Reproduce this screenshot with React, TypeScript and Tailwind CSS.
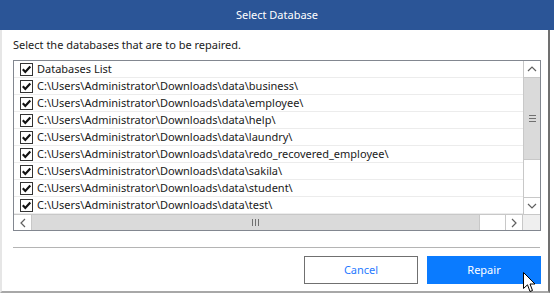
import React from 'react';

const paths = [
  'business',
  'employee',
  'help',
  'laundry',
  'redo_recovered_employee',
  'sakila',
  'student',
  'test',
];

function CheckBox() {
  return (
    <span className="w-[13px] h-[13px] border border-[#333333] bg-white flex items-center justify-center shrink-0">
      <svg width="11" height="11" viewBox="0 0 11 11">
        <path d="M1.8 5.3 L4.3 7.9 L9.3 2.6" fill="none" stroke="#111111" strokeWidth="2.2" />
      </svg>
    </span>
  );
}

function Row({ label }: { label: string }) {
  return (
    <div className="h-[17px] border-b border-[#ececec] flex items-center gap-[4px] pl-[6px] whitespace-nowrap">
      <CheckBox />
      <span className="text-[11px] leading-[16px] text-[#1a1a1a]">{label}</span>
    </div>
  );
}

function Chevron({ dir }: { dir: 'up' | 'down' | 'left' | 'right' }) {
  const d = {
    up: 'M1 6 L5 2 L9 6',
    down: 'M1 2 L5 6 L9 2',
    left: 'M6 1 L2 5 L6 9',
    right: 'M2 1 L6 5 L2 9',
  }[dir];
  const vertical = dir === 'up' || dir === 'down';
  return (
    <svg width={vertical ? 10 : 8} height={vertical ? 8 : 10} viewBox={vertical ? '0 0 10 8' : '0 0 8 10'}>
      <path d={d} fill="none" stroke="#606060" strokeWidth="1.2" />
    </svg>
  );
}

export default function App() {
  return (
    <div
      className="w-[554px] h-[294px] bg-white relative overflow-hidden"
      style={{ fontFamily: '"Noto Sans", "Open Sans", sans-serif' }}
    >
      <div className="h-[30px] bg-[#2b5597] flex items-center justify-center text-white text-[11px]">
        Select Database
      </div>

      <div className="w-[550px] h-[263px] border-l-2 border-l-[#e6e6e6] border-r-2 border-r-[#707070] border-b-2 border-b-[#a8a8a8] pl-[11px] pr-[7px] pt-[7px]">
        <p className="text-[11px] leading-[16px] text-[#1a1a1a]">Select the databases that are to be repaired.</p>

        <div className="mt-[7px] w-[528px] h-[171px] border border-[#828790] flex flex-col">
          <div className="flex h-[153px]">
            <div className="flex-1 min-w-0 overflow-hidden">
              <Row label="Databases List" />
              {paths.map(p => (
                <Row key={p} label={`C:\\Users\\Administrator\\Downloads\\data\\${p}\\`} />
              ))}
            </div>
            {/* vertical scrollbar */}
            <div className="w-[17px] shrink-0 flex flex-col border-l border-[#c8c8c8] bg-white">
              <div className="h-[17px] flex items-center justify-center border-b border-[#c8c8c8] bg-white">
                <Chevron dir="up" />
              </div>
              <div className="h-[82px] bg-[#dadada] border-b border-[#c8c8c8] flex flex-col items-center justify-center gap-[2px]">
                <span className="w-[7px] h-px bg-[#707070]" />
                <span className="w-[7px] h-px bg-[#707070]" />
                <span className="w-[7px] h-px bg-[#707070]" />
              </div>
              <div className="flex-1 bg-white" />
              <div className="h-[17px] flex items-center justify-center border-t border-[#c8c8c8] bg-white">
                <Chevron dir="down" />
              </div>
            </div>
          </div>
          {/* horizontal scrollbar */}
          <div className="flex h-[16px] border-t border-[#c8c8c8]">
            <div className="w-[18px] shrink-0 flex items-center justify-center border-r border-[#c8c8c8] bg-white">
              <Chevron dir="left" />
            </div>
            <div className="w-[448px] shrink-0 bg-[#dadada] border-r border-[#c8c8c8] flex items-center justify-center gap-[2px]">
              <span className="w-px h-[7px] bg-[#707070]" />
              <span className="w-px h-[7px] bg-[#707070]" />
              <span className="w-px h-[7px] bg-[#707070]" />
            </div>
            <div className="flex-1 bg-white" />
            <div className="w-[17px] shrink-0 flex items-center justify-center border-l border-[#c8c8c8] bg-white">
              <Chevron dir="right" />
            </div>
            <div className="w-[18px] shrink-0 bg-[#efefef] border-l border-[#c8c8c8]" />
          </div>
        </div>

        <div className="mt-[16px] w-[527px] h-px bg-[#b4b4b4]" />

        <div className="mt-[8px] flex justify-end gap-[9px] w-[528px]">
          <button className="w-[114px] h-[28px] border border-[#707070] bg-white text-[#1f7aff] text-[11px]">
            Cancel
          </button>
          <button className="w-[114px] h-[28px] bg-[#0a7bff] text-white text-[11px]">Repair</button>
        </div>
      </div>

      {/* mouse pointer */}
      <svg className="absolute left-[523px] top-[272px]" width="13" height="21" viewBox="0 0 13 21">
        <path
          d="M0.5 0.5 L0.5 16.5 L4.5 12.8 L7 19.5 L9.5 18.5 L7 12 L12 12 Z"
          fill="#ffffff"
          stroke="#000000"
          strokeWidth="1"
          strokeLinejoin="round"
        />
      </svg>
    </div>
  );
}
